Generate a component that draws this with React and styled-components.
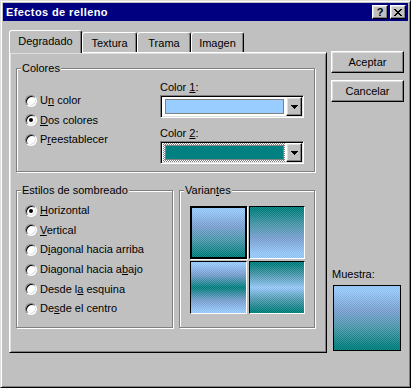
import React from "react";
import styled, { createGlobalStyle, css } from "styled-components";

const LIGHT = "#99ccff";
const TEAL = "#008080";
const MID = "#7aa2d4";
const MID2 = "#4a9aae";

const GlobalStyle = createGlobalStyle`
  html, body {
    margin: 0;
    padding: 0;
    background: #c0c0c0;
  }
  body {
    font-family: "Liberation Sans", Arial, sans-serif;
    font-size: 11px;
    line-height: 13px;
    color: #000;
  }
  * {
    box-sizing: border-box;
  }
`;

const shadingOptions = [
  { label: ["", "H", "orizontal"], checked: true },
  { label: ["", "V", "ertical"] },
  { label: ["D", "i", "agonal hacia arriba"] },
  { label: ["Diagonal hacia a", "b", "ajo"] },
  { label: ["Desde l", "a", " esquina"] },
  { label: ["De", "s", "de el centro"] },
];

const colorOptions = [
  { label: ["U", "n", " color"] },
  { label: ["", "D", "os colores"], checked: true },
  { label: ["P", "r", "eestablecer"] },
];

const down = `${LIGHT} 8%, ${MID} 40%, ${MID2} 65%, ${TEAL} 95%`;
const up = `${TEAL} 5%, ${MID2} 35%, ${MID} 60%, ${LIGHT} 92%`;

const variants = [
  { bg: `linear-gradient(${down})`, selected: true },
  { bg: `linear-gradient(${up})` },
  { bg: `linear-gradient(${LIGHT} 4%, ${MID} 25%, ${TEAL} 50%, ${MID} 75%, ${LIGHT} 96%)` },
  { bg: `linear-gradient(${TEAL} 4%, ${MID2} 25%, ${LIGHT} 50%, ${MID2} 75%, ${TEAL} 96%)` },
];

const tabs = [
  { name: "Degradado", width: 73, active: true },
  { name: "Textura", width: 55 },
  { name: "Trama", width: 54 },
  { name: "Imagen", width: 53 },
];

const Mnemonic = ({ parts }) => (
  <span>
    {parts[0]}
    <u>{parts[1]}</u>
    {parts[2]}
  </span>
);

const App = () => {
  return (
    <>
      <GlobalStyle />
      <Window>
        <TitleBar>
          <Title>Efectos de relleno</Title>
          <TitleButtons>
            <TitleButton>?</TitleButton>
            <TitleButton>
              <svg width="8" height="7" viewBox="0 0 8 7" shapeRendering="crispEdges">
                <path d="M0 0h2v1h1v1h2v-1h1v-1h2v1h-1v1h-1v1h-1v1h1v1h1v1h1v1h-2v-1h-1v-1h-2v1h-1v1h-2v-1h1v-1h1v-1h1v-1h-1v-1h-1v-1h-1z" />
              </svg>
            </TitleButton>
          </TitleButtons>
        </TitleBar>

        <Body>
          <LeftColumn>
            <TabStrip>
              {tabs.map((tab) => (
                <Tab key={tab.name} $active={tab.active} $width={tab.width}>
                  {tab.name}
                </Tab>
              ))}
            </TabStrip>

            <Panel>
              <Group $width={299} $height={104}>
                <GroupLabel>Colores</GroupLabel>
                <ColorsLayout>
                  <RadioList $top={22}>
                    {colorOptions.map((opt, i) => (
                      <Option key={i}>
                        <Radio $checked={opt.checked} />
                        <Mnemonic parts={opt.label} />
                      </Option>
                    ))}
                  </RadioList>
                  <ComboColumn>
                    <FieldLabel>
                      Color <u>1</u>:
                    </FieldLabel>
                    <Combo>
                      <SwatchArea>
                        <Swatch $color={LIGHT} />
                      </SwatchArea>
                      <DropButton>
                        <Arrow />
                      </DropButton>
                    </Combo>
                    <FieldLabel $gap>
                      Color <u>2</u>:
                    </FieldLabel>
                    <Combo>
                      <SwatchArea $focused>
                        <Swatch $color={TEAL} />
                      </SwatchArea>
                      <DropButton>
                        <Arrow />
                      </DropButton>
                    </Combo>
                  </ComboColumn>
                </ColorsLayout>
              </Group>

              <GroupRow>
                <Group $width={157} $height={138}>
                  <GroupLabel>Estilos de sombreado</GroupLabel>
                  <RadioList $top={10}>
                    {shadingOptions.map((opt, i) => (
                      <Option key={i} $tall>
                        <Radio $checked={opt.checked} />
                        <Mnemonic parts={opt.label} />
                      </Option>
                    ))}
                  </RadioList>
                </Group>
                <Group $width={136} $height={138}>
                  <GroupLabel>
                    Varian<u>t</u>es
                  </GroupLabel>
                  <VariantGrid>
                    {variants.map((v, i) => (
                      <Tile key={i} $bg={v.bg} $selected={v.selected} />
                    ))}
                  </VariantGrid>
                </Group>
              </GroupRow>
            </Panel>
          </LeftColumn>

          <RightColumn>
            <Button>Aceptar</Button>
            <Button $second>Cancelar</Button>
            <SampleBlock>
              <SampleLabel>Muestra:</SampleLabel>
              <Sample $bg={`linear-gradient(${down})`} />
            </SampleBlock>
          </RightColumn>
        </Body>
      </Window>
    </>
  );
};

const Arrow = () => (
  <svg width="7" height="4" viewBox="0 0 7 4" shapeRendering="crispEdges">
    <path d="M0 0h7v1h-1v1h-1v1h-1v1h-1v-1h-1v-1h-1v-1h-1z" />
  </svg>
);

const raised = css`
  background: #c0c0c0;
  border: 1px solid;
  border-color: #fff #000 #000 #fff;
  box-shadow: inset -1px -1px #808080, inset 1px 1px #dfdfdf;
`;

const sunken = css`
  border: 1px solid;
  border-color: #808080 #fff #fff #808080;
  box-shadow: inset 1px 1px #000, inset -1px -1px #dfdfdf;
`;

const dither = css`
  background-image:
    conic-gradient(rgba(255, 255, 255, 0.1) 25%, rgba(0, 0, 0, 0.07) 0 50%, rgba(255, 255, 255, 0.1) 0 75%, rgba(0, 0, 0, 0.07) 0),
    ${({ $bg }) => $bg};
  background-size: 2px 2px, 100% 100%;
`;

const Window = styled.div`
  display: flex;
  flex-direction: column;
  width: 411px;
  height: 388px;
  padding: 2px;
  background: #c0c0c0;
  border: 1px solid;
  border-color: #dfdfdf #000 #000 #dfdfdf;
  box-shadow: inset 1px 1px #fff, inset -1px -1px #808080;
`;

const TitleBar = styled.div`
  display: flex;
  align-items: center;
  justify-content: space-between;
  height: 18px;
  padding: 0 2px 0 3px;
  background: #000080;
`;

const Title = styled.span`
  color: #fff;
  font-weight: bold;
  font-size: 11px;
  letter-spacing: 0.4px;
`;

const TitleButtons = styled.div`
  display: flex;
  gap: 2px;
`;

const TitleButton = styled.div`
  ${raised}
  display: flex;
  align-items: center;
  justify-content: center;
  width: 16px;
  height: 14px;
  font-weight: bold;
  font-size: 11px;
  line-height: 11px;
  padding-top: 1px;
`;

const Body = styled.div`
  display: flex;
  padding: 9px 0 0 6px;
`;

const LeftColumn = styled.div`
  display: flex;
  flex-direction: column;
  width: 318px;
`;

const TabStrip = styled.div`
  position: relative;
  z-index: 1;
  display: flex;
  align-items: flex-end;
  height: 22px;
`;

const Tab = styled.div`
  display: flex;
  justify-content: center;
  width: ${({ $width }) => $width}px;
  height: ${({ $active }) => ($active ? 23 : 20)}px;
  margin-bottom: ${({ $active }) => ($active ? -1 : 0)}px;
  padding-top: 4px;
  background: #c0c0c0;
  border: 1px solid;
  border-bottom: none;
  border-color: #fff #000 transparent #fff;
  border-radius: 3px 3px 0 0;
  box-shadow: inset -1px 0 #808080;
`;

const Panel = styled.div`
  height: 301px;
  padding: 15px 0 0 6px;
  border: 1px solid;
  border-color: #fff #000 #000 #fff;
  box-shadow: inset 1px 1px #dfdfdf, inset -1px -1px #808080;
`;

const Group = styled.div`
  position: relative;
  width: ${({ $width }) => $width}px;
  height: ${({ $height }) => $height}px;
  border: 1px solid #808080;
  box-shadow: inset 1px 1px #fff, 1px 1px #fff;
`;

const GroupLabel = styled.span`
  position: absolute;
  top: -7px;
  left: 4px;
  padding: 0 1px;
  background: #c0c0c0;
  line-height: 13px;
`;

const GroupRow = styled.div`
  display: flex;
  gap: 6px;
  margin-top: 18px;
`;

const ColorsLayout = styled.div`
  display: grid;
  grid-template-columns: 143px 144px;
`;

const RadioList = styled.div`
  display: flex;
  flex-direction: column;
  padding: ${({ $top }) => $top}px 0 0 8px;
`;

const Option = styled.div`
  display: flex;
  align-items: center;
  gap: 3px;
  height: ${({ $tall }) => ($tall ? 19.6 : 19.5)}px;
  white-space: nowrap;
`;

const Radio = styled.span`
  position: relative;
  flex: none;
  width: 12px;
  height: 12px;
  border-radius: 50%;
  background: #fff;
  ${sunken}

  ${({ $checked }) =>
    $checked &&
    css`
      &::after {
        content: "";
        position: absolute;
        left: 3px;
        top: 3px;
        width: 4px;
        height: 4px;
        border-radius: 50%;
        background: #000;
      }
    `}
`;

const ComboColumn = styled.div`
  display: flex;
  flex-direction: column;
  padding-top: 12px;
`;

const FieldLabel = styled.div`
  margin-top: ${({ $gap }) => ($gap ? 9 : 0)}px;
  margin-bottom: 1px;
`;

const Combo = styled.div`
  display: flex;
  width: 144px;
  height: 23px;
  padding: 1px;
  background: #fff;
  ${sunken}
`;

const SwatchArea = styled.div`
  display: flex;
  flex: 1;
  padding: 2px 2px 2px 3px;
  ${({ $focused }) =>
    $focused &&
    css`
      margin: 0 1px;
      padding: 2px 1px 2px 2px;
      background: conic-gradient(#808080 25%, #fff 0 50%, #808080 0 75%, #fff 0) 0 0 / 2px 2px;
    `}
`;

const Swatch = styled.div`
  flex: 1;
  border: 1px solid #808080;
  background: ${({ $color }) => $color};
`;

const DropButton = styled.div`
  ${raised}
  display: flex;
  align-items: center;
  justify-content: center;
  width: 16px;
  padding-top: 1px;
`;

const VariantGrid = styled.div`
  display: grid;
  grid-template-columns: 57px 56px;
  grid-template-rows: 53px 53px;
  gap: 2px;
  padding: 15px 0 0 10px;
`;

const Tile = styled.div`
  ${dither}
  border: 1px solid;
  border-color: #000 #fff #fff #000;

  ${({ $selected }) =>
    $selected &&
    css`
      border-color: #000;
      box-shadow: inset 0 0 0 1px #000, 1px 1px #fff;
    `}
`;

const RightColumn = styled.div`
  display: flex;
  flex-direction: column;
  width: 73px;
  margin-left: 4px;
  padding: 21px 0 2px;
`;

const Button = styled.button`
  ${raised}
  width: 73px;
  height: 22px;
  margin-top: ${({ $second }) => ($second ? 7 : 0)}px;
  padding: 0;
  font-family: "Liberation Sans", Arial, sans-serif;
  font-size: 11px;
  color: #000;
`;

const SampleBlock = styled.div`
  display: flex;
  flex-direction: column;
  margin-top: auto;
`;

const SampleLabel = styled.div`
  padding-left: 1px;
  margin-bottom: 4px;
`;

const Sample = styled.div`
  ${dither}
  width: 68px;
  height: 66px;
  margin-left: 2px;
  border: 1px solid #000;
`;

export default App;
